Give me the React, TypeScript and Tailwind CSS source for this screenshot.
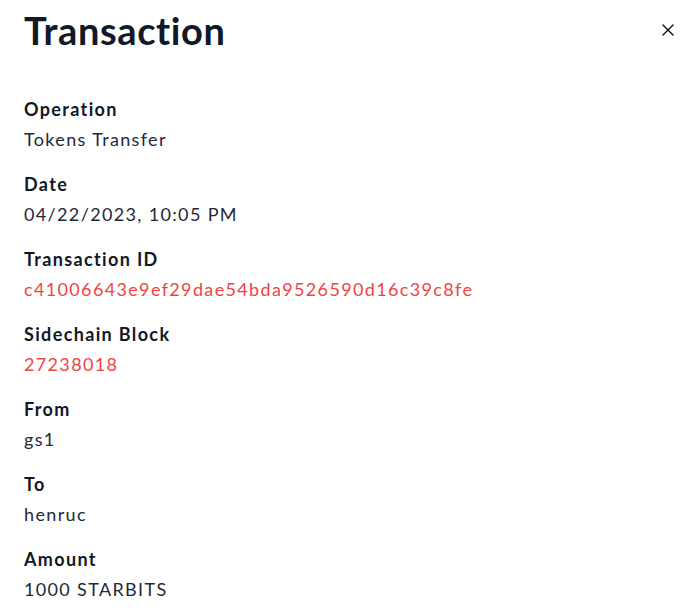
import { X } from "lucide-react";

type Field = {
    label: string;
    value: string;
    link?: boolean;
};

const fields: Field[] = [
    { label: "Operation", value: "Tokens Transfer" },
    { label: "Date", value: "04/22/2023, 10:05 PM" },
    { label: "Transaction ID", value: "c41006643e9ef29dae54bda9526590d16c39c8fe", link: true },
    { label: "Sidechain Block", value: "27238018", link: true },
    { label: "From", value: "gs1" },
    { label: "To", value: "henruc" },
    { label: "Amount", value: "1000 STARBITS" },
];

export default function App() {
    return (
        <div className="w-[696px] h-[614px] bg-white overflow-hidden font-['Lato','Noto_Sans',sans-serif]">
            <div className="flex justify-between items-center pl-6 pr-[18px] pt-[10px]">
                <h1 className="text-[38px] leading-[40px] font-bold tracking-[0.6px] text-[#111827]">Transaction</h1>
                <button className="text-[#111827]">
                    <X size={20} strokeWidth={1.8} />
                </button>
            </div>
            <div className="flex flex-col gap-[17px] px-6 mt-[45px]">
                {fields.map((f, i) => (
                    <div key={i} className="flex flex-col tracking-[1.35px]">
                        <p className="text-lg leading-7 font-bold text-[#111827]">{f.label}</p>
                        <p className={"mt-[2px] text-lg leading-7 " + (f.link ? "text-[#ef4444]" : "text-[#1f2937]")}>
                            {f.value}
                        </p>
                    </div>
                ))}
            </div>
        </div>
    );
}
